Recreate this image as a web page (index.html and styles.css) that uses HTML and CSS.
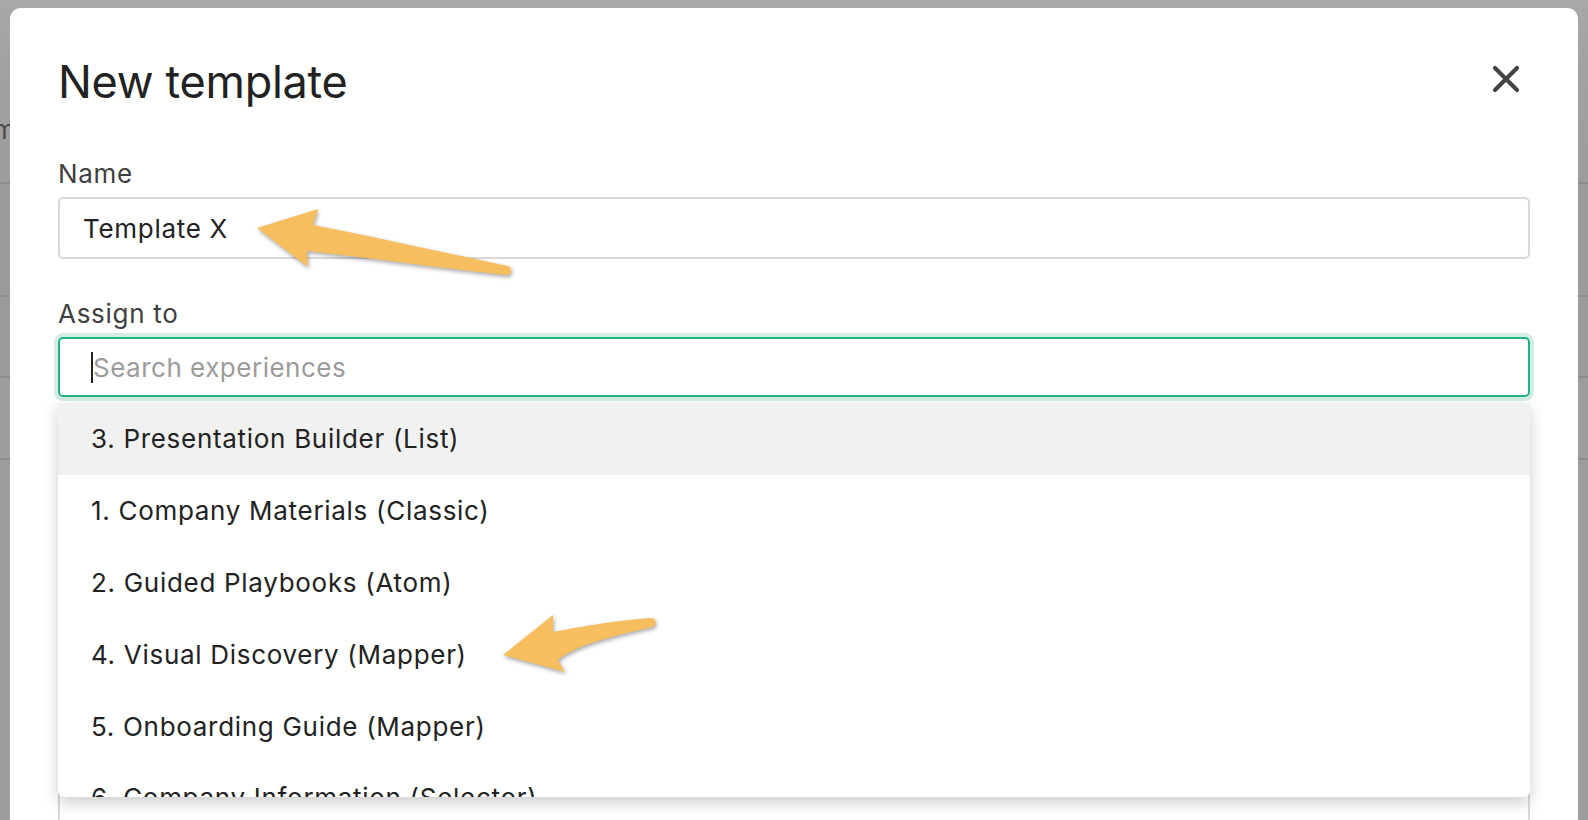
FILE: index.html
```html
<!DOCTYPE html>
<html lang="en">
<head>
    <meta charset="UTF-8">
    <title>New template</title>
    <link rel="stylesheet" href="styles.css">
</head>
<body>
    <div class="page">
        <div class="page-head"><span class="page-letter">m</span></div>
        <div class="page-row row-a"></div>
        <div class="page-row row-b"></div>
        <div class="page-row row-c"></div>
    </div>

    <div class="modal">
        <div class="modal-header">
            <h1 class="modal-title">New template</h1>
            <button class="close-btn" aria-label="Close">
                <svg width="28" height="28" viewBox="0 0 28 28">
                    <path d="M3 3 L25 25 M25 3 L3 25" stroke="#444" stroke-width="4.2" stroke-linecap="round" fill="none"/>
                </svg>
            </button>
        </div>

        <div class="field">
            <label class="field-label">Name</label>
            <div class="text-input">Template X</div>
        </div>

        <div class="field">
            <label class="field-label">Assign to</label>
            <div class="text-input search-input"><span class="caret"></span><span class="placeholder">Search experiences</span></div>

            <ul class="dropdown">
                <li class="dropdown-item active">3. Presentation Builder (List)</li>
                <li class="dropdown-item">1. Company Materials (Classic)</li>
                <li class="dropdown-item">2. Guided Playbooks (Atom)</li>
                <li class="dropdown-item">4. Visual Discovery (Mapper)</li>
                <li class="dropdown-item">5. Onboarding Guide (Mapper)</li>
                <li class="dropdown-item">6. Company Information (Selector)</li>
            </ul>
        </div>

        <!-- next field, mostly hidden under the open dropdown -->
        <div class="field field-hidden">
            <div class="text-input text-area"></div>
        </div>
    </div>

    <!-- annotation arrows -->
    <svg class="note-arrow arrow-name" width="280" height="90" viewBox="240 200 280 90">
        <path d="M257 228 L318 209 L313 225 C 380 238, 450 254, 508 266 C 513 268, 512 276, 506 275 C 440 268, 370 258, 307 251 L308 267 Z" fill="#f6be5f"/>
    </svg>
    <svg class="note-arrow arrow-visual" width="180" height="80" viewBox="490 600 180 80">
        <path d="M503 655 L553 615 L553 632 C 585 626, 620 620, 651 618 C 657 618, 657 626, 652 627 C 615 636, 575 645, 558 660 L565 672 Z" fill="#f6be5f"/>
    </svg>
</body>
</html>
```

FILE: styles.css
```css
* {
    box-sizing: border-box;
}

body {
    margin: 0;
    font-family: Inter, "Noto Sans", sans-serif;
    background-color: #9d9d9d;
    color: #222;
    height: 820px;
    overflow: hidden;
}

/* page behind the dimmed overlay */
.page {
    height: 100%;
}

.page-head {
    height: 184px;
    border-bottom: 2px solid #8c8c8c;
    background: linear-gradient(#a8a8a8, #a0a0a0 90px, #9d9d9d);
    padding-top: 114px;
}

.page-letter {
    font-size: 26px;
    color: #4a4a4a;
    margin-left: -7px;
}

.page-row {
    border-bottom: 2px solid #8c8c8c;
}

.row-a {
    height: 113px;
    background: #9b9b9b;
}

.row-b {
    height: 81px;
    background: #9b9b9b;
}

.row-c {
    height: 82px;
}

.modal {
    position: fixed;
    top: 8px;
    left: 10px;
    width: 1568px;
    height: 900px;
    background: #fff;
    border-radius: 11px;
    padding: 45px 48px 0 48px;
}

.modal-header {
    display: flex;
    justify-content: space-between;
    align-items: flex-start;
    margin-bottom: 47px;
}

.modal-title {
    margin: 0;
    font-size: 45px;
    font-weight: 400;
    line-height: 58px;
    color: #222;
    letter-spacing: -0.3px;
}

.close-btn {
    border: none;
    background: none;
    padding: 0;
    margin: 12px 10px 0 0;
    cursor: pointer;
}

.close-btn svg {
    display: block;
}

.field {
    position: relative;
    margin-bottom: 39px;
}

.field-label {
    display: block;
    font-size: 26px;
    line-height: 32px;
    letter-spacing: 0.7px;
    color: #3f3f3f;
    margin-bottom: 7px;
}

.text-input {
    height: 62px;
    border: 2px solid #d9d9d9;
    border-radius: 5px;
    padding: 0 23px;
    display: flex;
    align-items: center;
    font-size: 26px;
    letter-spacing: 0.7px;
    color: #222;
}

.search-input {
    height: 60px;
    border-color: #20b286;
    box-shadow: 0 0 0 4px #d4ece3;
    padding: 0 31px;
}

.caret {
    width: 2px;
    height: 31px;
    background: #222;
}

.placeholder {
    color: #9b9b9b;
    letter-spacing: 0.5px;
}

.field-hidden {
    margin-top: 78px;
}

.text-area {
    height: 420px;
}

.dropdown {
    position: absolute;
    top: 105px;
    left: 0;
    right: 0;
    height: 394px;
    margin: 0;
    padding: 0;
    list-style: none;
    background: #fff;
    border-radius: 0 0 6px 6px;
    box-shadow: 0 6px 16px rgba(0, 0, 0, 0.2);
    overflow: hidden;
    z-index: 2;
}

.dropdown-item {
    height: 71.8px;
    display: flex;
    align-items: center;
    padding: 0 33px;
    font-size: 26px;
    letter-spacing: 0.7px;
    color: #222;
}

.dropdown-item.active {
    background: #f1f1f1;
}

.note-arrow {
    position: absolute;
    filter: drop-shadow(1px 2px 2px rgba(0, 0, 0, 0.35));
}

.arrow-name {
    left: 240px;
    top: 200px;
}

.arrow-visual {
    left: 490px;
    top: 600px;
}
```
